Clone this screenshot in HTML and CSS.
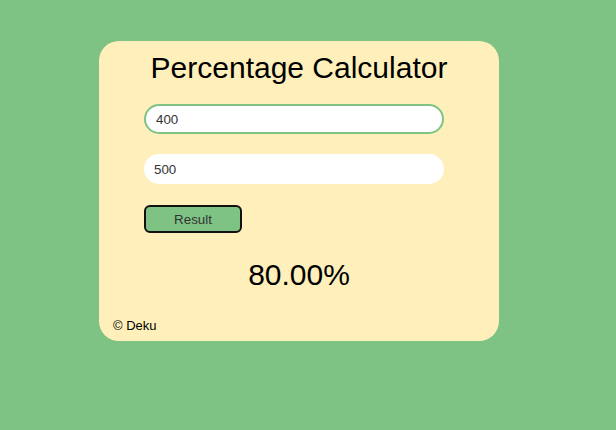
FILE: index.html
```html
<!DOCTYPE html>
<html lang="en">
<head>
<meta charset="utf-8">
<title>Percentage Calculator</title>
<link rel="stylesheet" href="styles.css">
</head>
<body>
  <main class="card">
    <h1 class="title">Percentage Calculator</h1>
    <div class="form">
      <input class="field field-focus" type="text" value="400">
      <input class="field" type="text" value="500">
      <button class="btn" type="button">Result</button>
    </div>
    <p class="result">80.00%</p>
    <footer class="footer">© Deku</footer>
  </main>
</body>
</html>
```

FILE: styles.css
```css
html, body {
  margin: 0;
  padding: 0;
}

body {
  background: #7ec384;
  font-family: "Liberation Sans", Arial, sans-serif;
  width: 616px;
  height: 430px;
}

.card {
  box-sizing: border-box;
  width: 400px;
  height: 300px;
  margin: 41px 0 0 99px;
  background: #fff0bb;
  border-radius: 20px;
  padding: 10px 0 8px 0;
  display: flex;
  flex-direction: column;
}

.title {
  margin: 0;
  font-size: 30px;
  line-height: 34px;
  font-weight: normal;
  text-align: center;
  color: #000;
}

.form {
  display: flex;
  flex-direction: column;
  align-items: flex-start;
  padding-left: 45px;
  margin-top: 19px;
}

.field {
  box-sizing: border-box;
  width: 300px;
  height: 30px;
  border: 0;
  border-radius: 15px;
  background: #fff;
  padding: 0 10px;
  font-family: "Liberation Sans", Arial, sans-serif;
  font-size: 13.333px;
  color: #333;
  outline: none;
  margin-bottom: 20px;
}

.field-focus {
  border: 2px solid #7ec384;
}

.btn {
  box-sizing: border-box;
  width: 98px;
  height: 28px;
  margin-top: 1px;
  background: #7ec384;
  border: 2px solid #111;
  border-radius: 6px;
  font-family: "Liberation Sans", Arial, sans-serif;
  font-size: 13.333px;
  color: #333;
  padding: 0;
}

.result {
  margin: 25px 0 0 0;
  font-size: 30px;
  line-height: 34px;
  text-align: center;
  color: #000;
}

.footer {
  margin-top: auto;
  padding-left: 14px;
  font-size: 13px;
  line-height: 15px;
  color: #000;
}
```
